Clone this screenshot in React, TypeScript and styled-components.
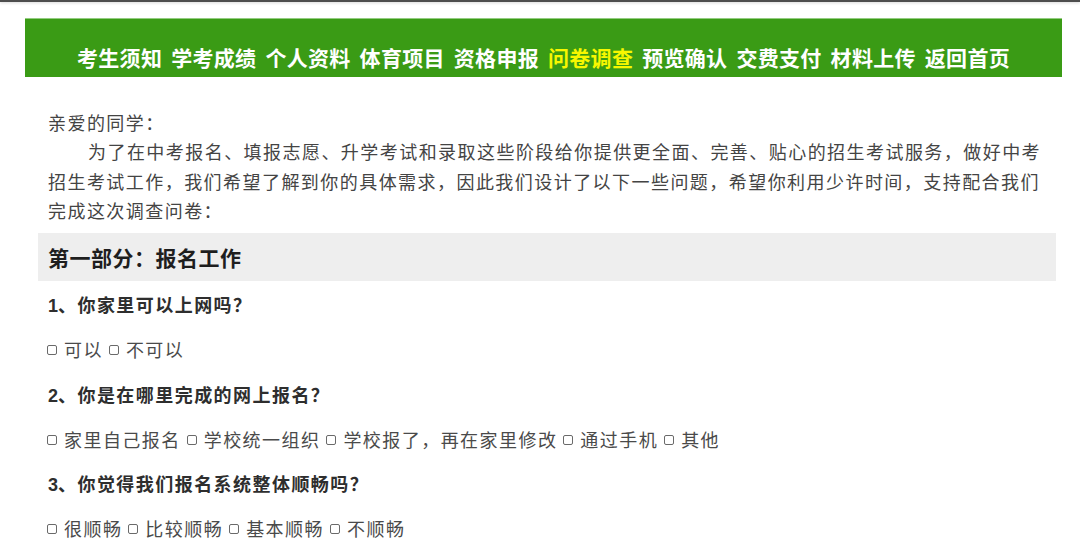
import React from "react";
import styled, { createGlobalStyle } from "styled-components";

const navItems = [
  "考生须知",
  "学考成绩",
  "个人资料",
  "体育项目",
  "资格申报",
  "问卷调查",
  "预览确认",
  "交费支付",
  "材料上传",
  "返回首页",
];

const questions = [
  {
    title: "你家里可以上网吗？",
    options: ["可以", "不可以"],
  },
  {
    title: "你是在哪里完成的网上报名？",
    options: ["家里自己报名", "学校统一组织", "学校报了，再在家里修改", "通过手机", "其他"],
  },
  {
    title: "你觉得我们报名系统整体顺畅吗？",
    options: ["很顺畅", "比较顺畅", "基本顺畅", "不顺畅"],
  },
];

const App = () => {
  return (
    <Page>
      <GlobalStyle />
      <TopEdge />
      <NavBar>
        {navItems.map((item) => (
          <NavLink key={item} active={item === "问卷调查"}>
            {item}
          </NavLink>
        ))}
      </NavBar>
      <Content>
        <Intro>
          <div>亲爱的同学：</div>
          <Paragraph>
            为了在中考报名、填报志愿、升学考试和录取这些阶段给你提供更全面、完善、贴心的招生考试服务，做好中考招生考试工作，我们希望了解到你的具体需求，因此我们设计了以下一些问题，希望你利用少许时间，支持配合我们完成这次调查问卷：
          </Paragraph>
        </Intro>
        <SectionTitle>第一部分：报名工作</SectionTitle>
        <QuestionList>
          {questions.map((q, i) => (
            <div key={q.title}>
              <Question>
                <Num>{i + 1}</Num>、{q.title}
              </Question>
              <Options>
                {q.options.map((opt) => (
                  <Option key={opt}>
                    <Box />
                    {opt}
                  </Option>
                ))}
              </Options>
            </div>
          ))}
        </QuestionList>
      </Content>
    </Page>
  );
};
export default App;

const GlobalStyle = createGlobalStyle`
  html, body {
    margin: 0;
    padding: 0;
    background: #ffffff;
  }
  body {
    font-family: "Noto Sans CJK SC", sans-serif;
  }
`;

const Page = styled.div`
  width: 1080px;
  height: 538px;
  overflow: hidden;
  background: #ffffff;
`;

const TopEdge = styled.div`
  height: 2px;
  background: #4d4d4d;
  box-shadow: 0 1px 3px rgba(0, 0, 0, 0.18);
`;

const NavBar = styled.nav`
  display: flex;
  justify-content: center;
  align-items: center;
  gap: 9px;
  box-sizing: border-box;
  width: 1037px;
  height: 59px;
  margin: 16px 0 0 25px;
  padding-top: 17px;
  background: #3a9b15;
  border-top: 1px solid #93cc80;
`;

const NavLink = styled.span<{ active?: boolean }>`
  font-family: "Noto Sans CJK SC", sans-serif;
  font-size: 21px;
  font-weight: 700;
  letter-spacing: 0.3px;
  line-height: 24px;
  color: ${(p) => (p.active ? "#f7f700" : "#ffffff")};
`;

const Content = styled.div`
  width: 1018px;
  margin: 31px 0 0 38px;
`;

const Intro = styled.div`
  padding: 0 10px;
  font-family: "Noto Sans CJK SC", sans-serif;
  font-size: 18px;
  letter-spacing: 1.45px;
  line-height: 29.3px;
  color: #444444;
`;

const Paragraph = styled.p`
  margin: 0;
  text-indent: 40px;
`;

const SectionTitle = styled.div`
  display: flex;
  align-items: center;
  height: 48px;
  margin-top: 8px;
  padding: 0 10px;
  background: #eeeeee;
  font-family: "Noto Sans CJK SC", sans-serif;
  font-size: 21px;
  font-weight: 700;
  letter-spacing: 0.5px;
  color: #1e1e1e;
`;

const QuestionList = styled.div`
  padding-top: 1px;
`;

const Question = styled.div`
  height: 44.7px;
  line-height: 44.7px;
  padding: 0 10px;
  font-family: "Noto Sans CJK SC", sans-serif;
  font-size: 18px;
  font-weight: 700;
  letter-spacing: 1.45px;
  color: #2e2e2e;
`;

const Num = styled.span`
  font-family: "Liberation Sans", sans-serif;
  font-weight: 700;
  letter-spacing: 0;
`;

const Options = styled.div`
  display: flex;
  align-items: center;
  height: 44.7px;
  padding: 0 9px;
  gap: 6px;
  font-family: "Noto Sans CJK SC", sans-serif;
  font-size: 18px;
  letter-spacing: 1.45px;
  color: #4a4a4a;
`;

const Option = styled.span`
  display: inline-flex;
  align-items: center;
`;

const Box = styled.span`
  display: inline-block;
  box-sizing: border-box;
  width: 10px;
  height: 10px;
  margin: 2px 7px 0 0;
  border: 1px solid #6a6a6a;
  border-radius: 2px;
  background: #ffffff;
`;
